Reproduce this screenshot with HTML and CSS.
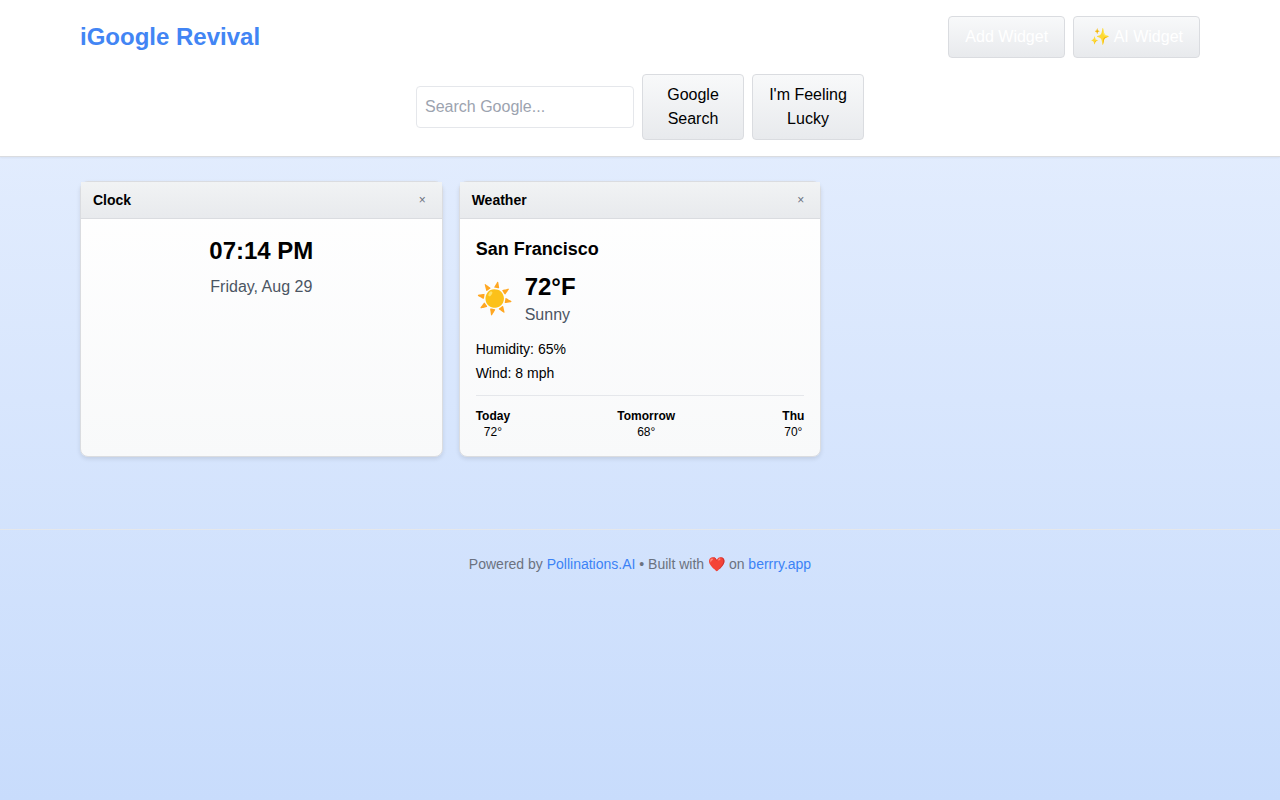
FILE: index.html
```html
<!DOCTYPE html>
<html lang="en">
<head>
    <meta charset="UTF-8">
    <meta name="viewport" content="width=device-width, initial-scale=1.0">
    <title>iGoogle Revival</title>
    <link rel="stylesheet" href="styles.css">
</head>
<body>
    <header class="header">
        <div class="container">
            <div class="top-bar">
                <h1 class="logo">iGoogle Revival</h1>
                <div class="actions">
                    <button type="button" class="btn btn-light">Add Widget</button>
                    <button type="button" class="btn btn-light">✨ AI Widget</button>
                </div>
            </div>
            <form class="search">
                <input type="text" class="search-input" placeholder="Search Google..." aria-label="Search Google">
                <button type="submit" class="btn btn-search">Google Search</button>
                <button type="button" class="btn btn-lucky">I'm Feeling Lucky</button>
            </form>
        </div>
    </header>

    <main class="container main">
        <div class="widgets">
            <!-- Clock -->
            <section class="widget">
                <div class="widget-header">
                    <h2>Clock</h2>
                    <button type="button" class="close-btn" aria-label="Remove Clock">×</button>
                </div>
                <div class="widget-content clock">
                    <div class="big">07:14 PM</div>
                    <div class="muted date">Friday, Aug 29</div>
                </div>
            </section>

            <!-- Weather -->
            <section class="widget">
                <div class="widget-header">
                    <h2>Weather</h2>
                    <button type="button" class="close-btn" aria-label="Remove Weather">×</button>
                </div>
                <div class="widget-content">
                    <h3 class="city">San Francisco</h3>
                    <div class="current">
                        <span class="weather-icon">☀️</span>
                        <div>
                            <div class="big">72°F</div>
                            <div class="muted">Sunny</div>
                        </div>
                    </div>
                    <div class="details">
                        <div>Humidity: 65%</div>
                        <div>Wind: 8 mph</div>
                    </div>
                    <div class="forecast">
                        <div><strong>Today</strong><br>72°</div>
                        <div><strong>Tomorrow</strong><br>68°</div>
                        <div><strong>Thu</strong><br>70°</div>
                    </div>
                </div>
            </section>
        </div>
    </main>

    <footer class="footer">
        Powered by <a href="#">Pollinations.AI</a> • Built with ❤️ on <a href="#">berrry.app</a>
    </footer>
</body>
</html>
```

FILE: styles.css
```css
* {
    margin: 0;
    padding: 0;
    box-sizing: border-box;
}

body {
    min-height: 100vh;
    background: linear-gradient(to bottom, #e8f0fe 0%, #c8dcfc 100%);
    font-family: "Liberation Sans", Arial, sans-serif;
    font-size: 16px;
    line-height: 24px;
    color: #000;
}

button,
input {
    font: inherit;
    color: inherit;
}

.container {
    max-width: 1152px;
    margin: 0 auto;
    padding: 0 16px;
}

.header {
    background: #fff;
    padding: 16px 0;
    border-bottom: 1px solid #dadce0;
    box-shadow: 0 1px 2px rgba(0, 0, 0, 0.05);
}

.top-bar {
    display: flex;
    justify-content: space-between;
    align-items: center;
}

.logo {
    font-size: 24px;
    line-height: 32px;
    color: #4285f4;
}

.actions {
    display: flex;
    gap: 8px;
}

.btn {
    padding: 8px 16px;
    background: linear-gradient(to bottom, #f8f9fa, #e8eaed);
    border: 1px solid #dadce0;
    border-radius: 4px;
    cursor: pointer;
}

.btn:hover {
    border-color: #c0c4c9;
}

.btn-light {
    color: #fff;
}

.search {
    display: flex;
    align-items: center;
    gap: 8px;
    max-width: 448px;
    margin: 16px auto 0;
}

.search-input {
    flex: 1;
    min-width: 0;
    padding: 8px;
    border: 1px solid #e5e7eb;
    border-radius: 4px;
    background: #fff;
}

.search-input::placeholder {
    color: #9ca3af;
}

.btn-search {
    flex: 0 0 102px;
}

.btn-lucky {
    flex: 0 0 112px;
}

.main {
    padding-top: 24px;
    padding-bottom: 24px;
}

.widgets {
    display: grid;
    grid-template-columns: repeat(3, 1fr);
    gap: 16px;
}

.widget {
    background: linear-gradient(to bottom, #fff, #f8f9fa);
    border: 1px solid #dadce0;
    border-radius: 8px;
    box-shadow: 0 2px 4px rgba(0, 0, 0, 0.1);
}

.widget-header {
    display: flex;
    justify-content: space-between;
    align-items: center;
    padding: 8px 12px;
    background: linear-gradient(to bottom, #f1f3f4, #e8eaed);
    border-bottom: 1px solid #dadce0;
}

.widget-header h2 {
    font-size: 14px;
    line-height: 20px;
}

.close-btn {
    padding: 0 4px;
    background: none;
    border: none;
    font-size: 12px;
    line-height: 16px;
    color: #6b7280;
    cursor: pointer;
}

.widget-content {
    padding: 16px;
}

.clock {
    text-align: center;
}

.big {
    font-size: 24px;
    line-height: 32px;
    font-weight: bold;
}

.muted {
    color: #4b5563;
}

.date {
    margin-top: 8px;
}

.city {
    margin-bottom: 8px;
    font-size: 18px;
    line-height: 28px;
}

.current {
    display: flex;
    align-items: center;
    gap: 12px;
    margin-bottom: 12px;
}

.weather-icon {
    font-size: 30px;
    line-height: 36px;
}

.details {
    display: grid;
    gap: 4px;
    font-size: 14px;
    line-height: 20px;
}

.forecast {
    display: flex;
    justify-content: space-between;
    margin-top: 12px;
    padding-top: 12px;
    border-top: 1px solid #e5e7eb;
    font-size: 12px;
    line-height: 16px;
    text-align: center;
}

.footer {
    margin-top: 48px;
    padding: 24px 16px;
    border-top: 1px solid #e5e7eb;
    font-size: 14px;
    line-height: 20px;
    text-align: center;
    color: #6b7280;
}

.footer a {
    color: #3b82f6;
    text-decoration: none;
}

.footer a:hover {
    text-decoration: underline;
}

@media (max-width: 900px) {
    .widgets {
        grid-template-columns: repeat(2, 1fr);
    }
}

@media (max-width: 600px) {
    .widgets {
        grid-template-columns: 1fr;
    }
}
```
